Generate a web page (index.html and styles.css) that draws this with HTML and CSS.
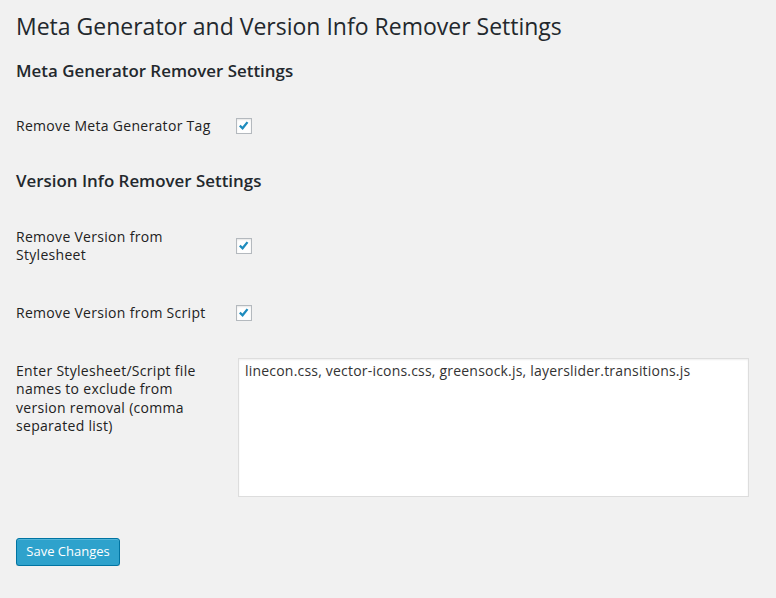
FILE: index.html
```html
<!DOCTYPE html>
<html>
<head>
<meta charset="utf-8">
<link rel="stylesheet" href="styles.css">
</head>
<body>
<div class="wrap">
  <h1 class="page-title">Meta Generator and Version Info Remover Settings</h1>
  <h3 class="section-title">Meta Generator Remover Settings</h3>
  <table class="form-table">
    <tr>
      <th>Remove Meta Generator Tag</th>
      <td><span class="checkbox"><svg viewBox="0 0 16 16" width="14" height="14"><path d="M3.2 7.6 L6.4 10.6 L12 3.6" fill="none" stroke="#1e8cbe" stroke-width="2.6"/></svg></span></td>
    </tr>
  </table>
  <h3 class="section-title">Version Info Remover Settings</h3>
  <table class="form-table">
    <tr>
      <th>Remove Version from Stylesheet</th>
      <td><span class="checkbox"><svg viewBox="0 0 16 16" width="14" height="14"><path d="M3.2 7.6 L6.4 10.6 L12 3.6" fill="none" stroke="#1e8cbe" stroke-width="2.6"/></svg></span></td>
    </tr>
    <tr>
      <th>Remove Version from Script</th>
      <td><span class="checkbox"><svg viewBox="0 0 16 16" width="14" height="14"><path d="M3.2 7.6 L6.4 10.6 L12 3.6" fill="none" stroke="#1e8cbe" stroke-width="2.6"/></svg></span></td>
    </tr>
    <tr>
      <th>Enter Stylesheet/Script file names to exclude from version removal (comma separated list)</th>
      <td><div class="textarea">linecon.css, vector-icons.css, greensock.js, layerslider.transitions.js</div></td>
    </tr>
  </table>
  <p class="submit"><span class="button-primary">Save Changes</span></p>
</div>
</body>
</html>
```
FILE: styles.css
```css
html, body {
  margin: 0;
  padding: 0;
  background: #f1f1f1;
}
body {
  font-family: "Open Sans", "DejaVu Sans", sans-serif;
  font-size: 13px;
  line-height: 18.2px;
  color: #444;
}
.wrap {
  padding: 3px 0 0 16px;
}
.page-title {
  margin: 0;
  padding: 9px 0 4px 0;
  font-size: 23px;
  font-weight: 400;
  line-height: 29px;
  color: #23282d;
}
.section-title {
  margin: 17px 0;
  font-size: 16.9px;
  font-weight: 600;
  line-height: 18.2px;
  color: #23282d;
}
.form-table {
  border-collapse: collapse;
  border-spacing: 0;
  table-layout: fixed;
  width: 760px;
}
.form-table th {
  width: 200px;
  padding: 20px 10px 20px 0;
  text-align: left;
  vertical-align: top;
  font-size: 14px;
  line-height: 18.2px;
  font-weight: 400;
  letter-spacing: 0.3px;
  color: #222;
}
.form-table td {
  padding: 15px 10px;
  vertical-align: middle;
  font-size: 14px;
  line-height: 18.2px;
}
.checkbox {
  display: flex;
  align-items: center;
  justify-content: center;
  width: 14px;
  height: 14px;
  border: 1px solid #b4b9be;
  background: #fff;
  box-shadow: inset 0 1px 2px rgba(0,0,0,.1);
}
.checkbox svg {
  display: block;
}
.textarea {
  margin: 1px 0 0 2px;
  width: 497px;
  height: 125px;
  padding: 2px 6px 10px 6px;
  border: 1px solid #ddd;
  background: #fff;
  box-shadow: inset 0 1px 2px rgba(0,0,0,.07);
  color: #333;
  font-size: 14px;
  line-height: 20px;
  letter-spacing: 0.2px;
}
.submit {
  margin: 26px 0 0 0;
  padding: 0;
}
.button-primary {
  display: inline-block;
  box-sizing: border-box;
  height: 28px;
  width: 104px;
  padding: 0 0 1px 0;
  text-align: center;
  line-height: 25px;
  font-size: 13px;
  color: #fff;
  background: #2ea2cc;
  border: 1px solid #0074a2;
  border-radius: 3px;
  box-shadow: inset 0 1px 0 rgba(120,200,230,.5), 0 1px 0 rgba(0,0,0,.15);
}
```
